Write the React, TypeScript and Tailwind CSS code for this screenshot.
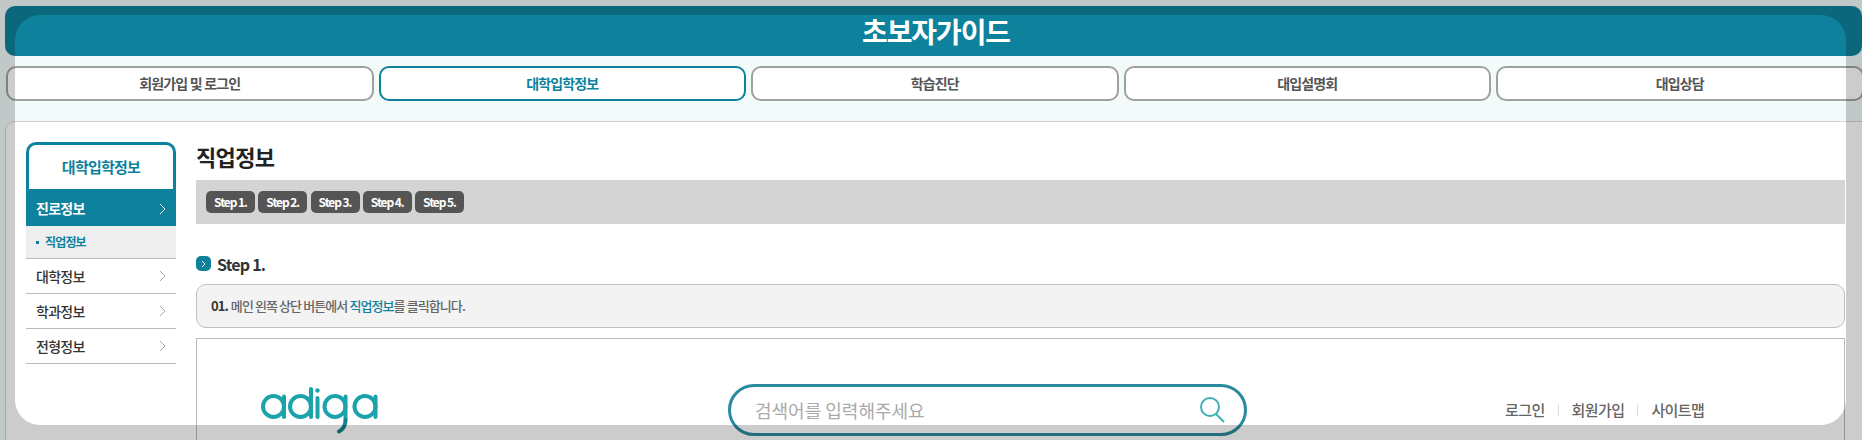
import React from "react";

const FONT = "font-['Noto_Sans_CJK_KR','Noto_Sans',sans-serif]";

function Chevron({ className }: { className: string }) {
  return (
    <svg width="7" height="12" viewBox="0 0 7 12" fill="none" className={className}>
      <path d="M1 1l5 5-5 5" stroke="currentColor" strokeWidth="1" />
    </svg>
  );
}

function Logo() {
  const s = { stroke: "#1aa3aa", strokeWidth: 4, fill: "none", strokeLinecap: "round" as const };
  return (
    <svg width="118" height="47" viewBox="0 0 118 47" className="block">
      <circle cx="12.5" cy="19.5" r="10.5" {...s} />
      <path d="M23 9.5V30" {...s} />
      <circle cx="39.5" cy="19.5" r="10.5" {...s} />
      <path d="M50 2V30" {...s} />
      <path d="M56.5 11V30" {...s} />
      <circle cx="56.5" cy="3.5" r="2.2" fill="#1aa3aa" />
      <circle cx="74" cy="19.5" r="10.5" {...s} />
      <path d="M84.5 9.5V33" {...s} />
      <path d="M84.5 33Q84.5 41 78 44.5" {...s} stroke="#15838f" />
      <circle cx="104" cy="19.5" r="10.5" {...s} />
      <path d="M114.5 9.5V30" {...s} />
    </svg>
  );
}

const tabs = ["회원가입 및 로그인", "대학입학정보", "학습진단", "대입설명회", "대입상담"];
const steps = ["Step 1.", "Step 2.", "Step 3.", "Step 4.", "Step 5."];
const rows = ["대학정보", "학과정보", "전형정보"];

export default function App() {
  return (
    <div className={`relative w-[1862px] h-[440px] overflow-hidden bg-[#f2fafa] pt-[6px] pl-[5px] ${FONT}`}>
      <header className="h-[50px] rounded-[10px] bg-[#0e819c] flex items-center justify-center pl-[5px]">
        <h1 className="text-[28px] leading-none font-bold text-white tracking-[-0.04em]">초보자가이드</h1>
      </header>

      <nav className="mt-[10px] ml-[1px] flex gap-[5px]">
        {tabs.map((t, i) => (
          <div
            key={t}
            className={`w-[367.5px] shrink-0 h-[35px] rounded-[10px] border-2 bg-white flex items-center justify-center text-[14px] font-bold tracking-[-0.06em] ${
              i === 1 ? "border-[#0e819c] text-[#0e819c]" : "border-[#a0a0a0] text-[#555555]"
            }`}
          >
            {t}
          </div>
        ))}
      </nav>

      <main className="mt-[20px] h-[400px] w-[1870px] rounded-[10px] border border-[#d2d2d2] bg-white flex gap-[20px] pt-[20px] pl-[20px]">
        <aside className="w-[150px] shrink-0">
          <div className="h-[47px] rounded-t-[10px] border-[3px] border-b-0 border-[#0e819c] flex items-center justify-center text-[15px] font-bold text-[#0e819c] tracking-[-0.05em]">
            대학입학정보
          </div>
          <div className="h-[37px] bg-[#0e819c] text-white text-[14px] font-bold tracking-[-0.05em] flex items-center justify-between pl-[10px] pr-[10px] pt-[2px]">
            진로정보
            <Chevron className="text-white" />
          </div>
          <div className="h-[33px] bg-[#eeeeee] border-b border-[#bbbbbb] flex items-center pl-[10px] gap-[6px] text-[12px] font-bold text-[#0e819c] tracking-[-0.07em]">
            <span className="w-[3px] h-[3px] bg-[#0e819c]" />
            직업정보
          </div>
          {rows.map((r) => (
            <div
              key={r}
              className="h-[35px] border-b border-[#bbbbbb] flex items-center justify-between pl-[10px] pr-[10px] text-[14px] font-medium text-[#333333] tracking-[-0.05em]"
            >
              {r}
              <Chevron className="text-[#aaaaaa]" />
            </div>
          ))}
        </aside>

        <section className="w-[1649px] shrink-0">
          <h2 className="h-[38px] text-[22px] leading-[29px] font-bold text-[#222222] tracking-[-0.03em]">직업정보</h2>
          <div className="h-[44px] bg-[#d4d4d4] flex items-center gap-[3.25px] pl-[10px]">
            {steps.map((s) => (
              <span
                key={s}
                className="h-[22px] w-[49px] rounded-[5px] bg-[#555555] text-white text-[12px] font-bold tracking-[-0.09em] flex items-center justify-center"
              >
                {s}
              </span>
            ))}
          </div>

          <div className="mt-[32px] h-[15px] flex items-center gap-[6px]">
            <span className="w-[15px] h-[15px] rounded-[5px] bg-[#0e819c] flex items-center justify-center">
              <svg width="5" height="8" viewBox="0 0 5 8" fill="none">
                <path d="M1 1l3 3-3 3" stroke="#ffffff" strokeWidth="1" />
              </svg>
            </span>
            <h3 className="text-[16px] font-bold text-[#333333] tracking-[-0.05em]">Step 1.</h3>
          </div>

          <div className="mt-[13px] h-[44px] rounded-[10px] border border-[#c0c0c0] bg-[#f3f3f3] flex items-center pl-[14px] text-[13px] font-medium text-[#666666] tracking-[-0.07em]">
            <b className="text-[#333333] font-bold mr-[3px]">01.</b>
            메인 왼쪽 상단 버튼에서&nbsp;
            <span className="text-[#0e819c]">직업정보</span>를 클릭합니다.
          </div>

          <div className="mt-[10px] h-[200px] border border-[#bbbbbb] bg-white flex items-start pt-[45px]">
            <div className="ml-[64px] w-[467px] shrink-0 pt-[3px]">
              <Logo />
            </div>
            <div className="w-[519px] h-[52px] shrink-0 rounded-full border-[3px] border-[#2a8a9e] flex items-center justify-between pl-[24px] pr-[18px]">
              <span className="text-[18px] text-[#aaaaaa]">검색어를 입력해주세요</span>
              <svg width="28" height="28" viewBox="0 0 28 28" fill="none">
                <circle cx="12" cy="11" r="9" stroke="#3db0b5" strokeWidth="2" />
                <path d="M18 18l8 8" stroke="#3db0b5" strokeWidth="2" />
              </svg>
            </div>
            <div className="ml-[258px] h-[52px] flex items-center text-[15px] text-[#666666] tracking-[-0.04em] font-medium">
              <span>로그인</span>
              <span className="mx-[13px] w-px h-[12px] bg-[#dddddd]" />
              <span>회원가입</span>
              <span className="mx-[13px] w-px h-[12px] bg-[#dddddd]" />
              <span>사이트맵</span>
            </div>
          </div>
        </section>
      </main>

      <div className="absolute left-[15px] top-[15px] w-[1831px] h-[410px] rounded-[25px] shadow-[0_0_0_2000px_rgba(0,0,0,0.2)] pointer-events-none" />
    </div>
  );
}
